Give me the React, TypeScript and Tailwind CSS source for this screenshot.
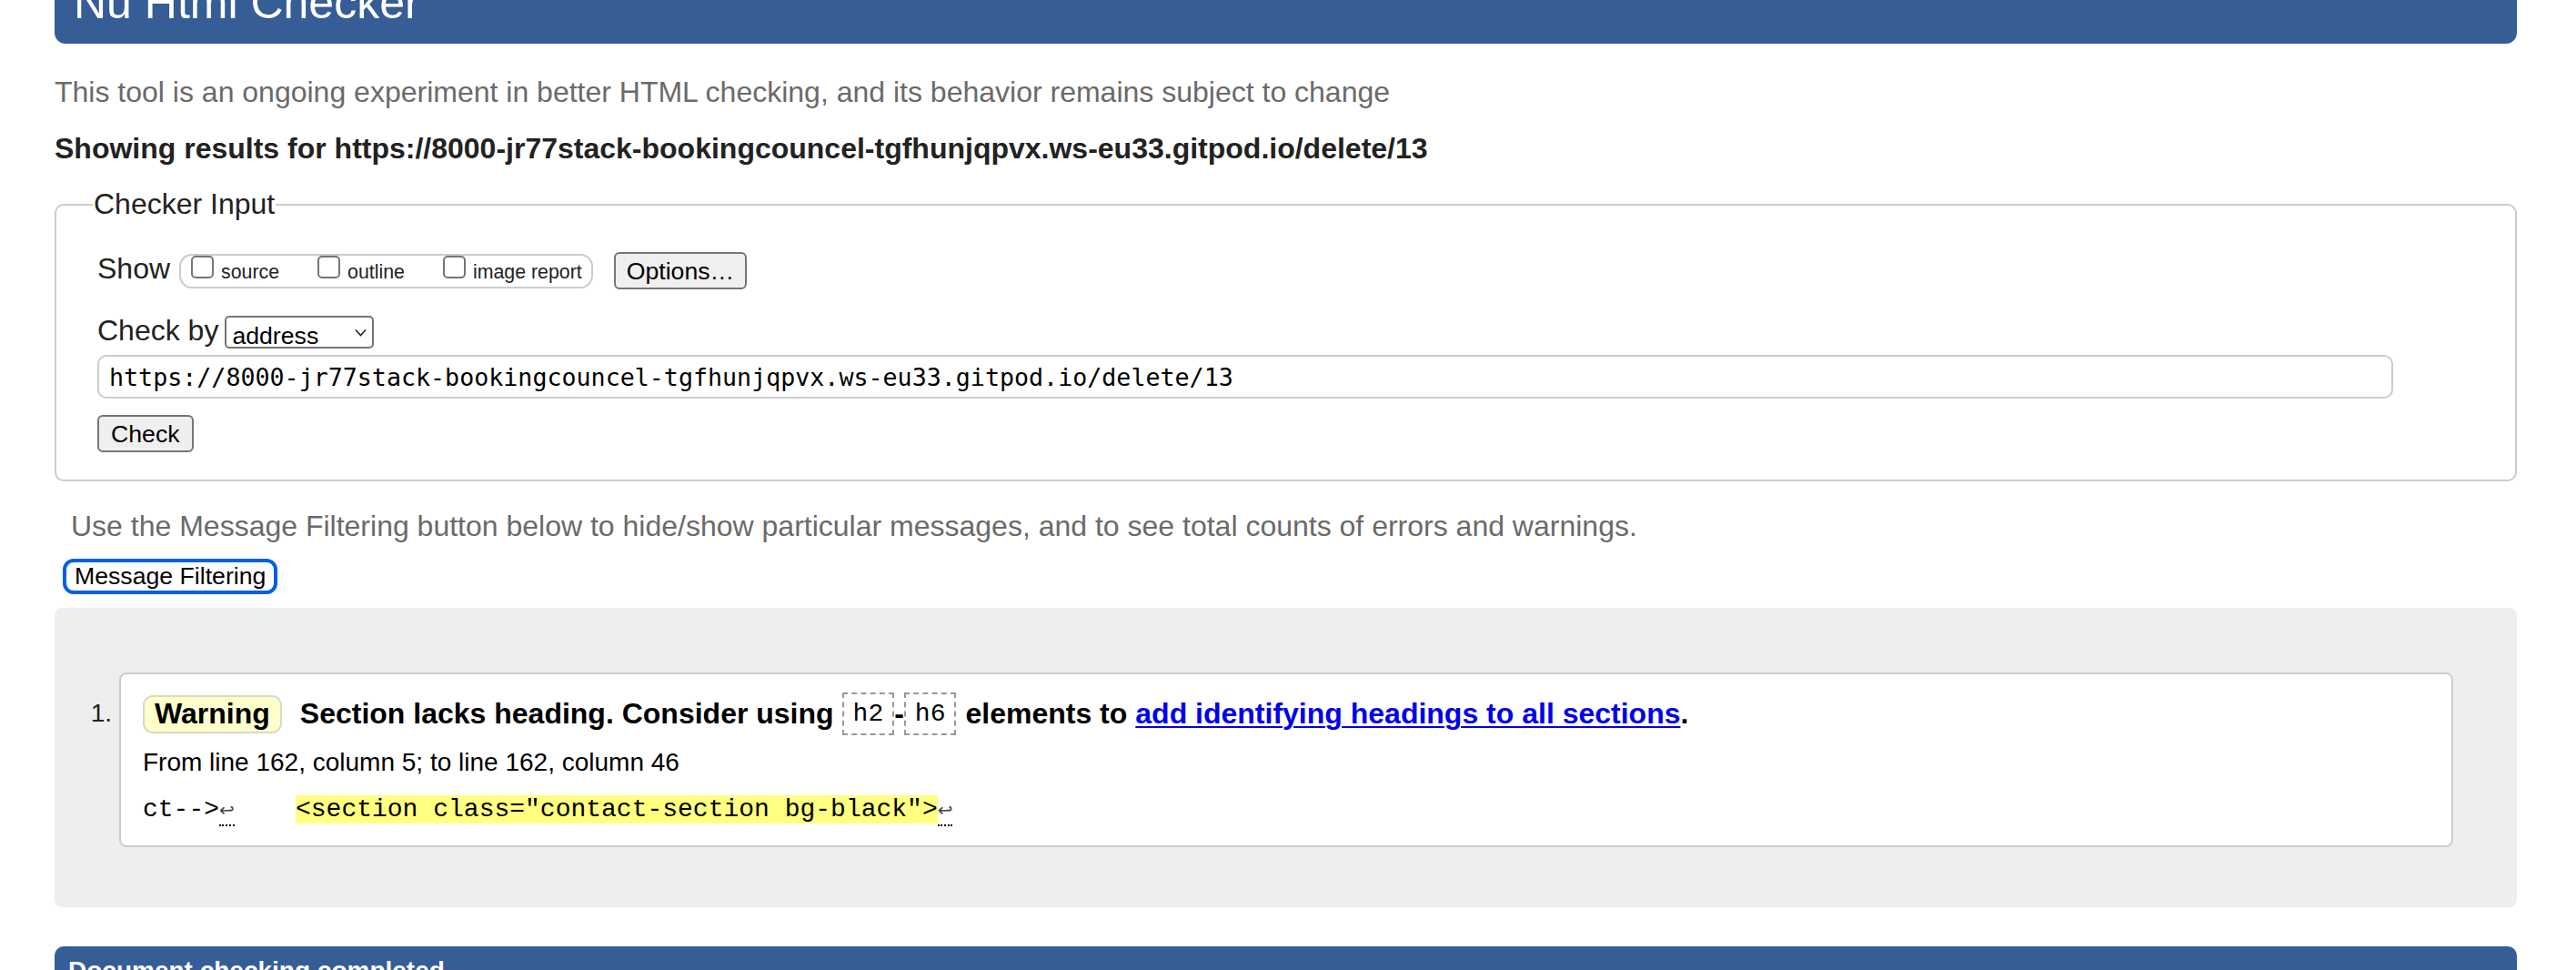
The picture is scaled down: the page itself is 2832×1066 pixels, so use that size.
const URL = 'https://8000-jr77stack-bookingcouncel-tgfhunjqpvx.ws-eu33.gitpod.io/delete/13';

const SHOW_OPTIONS = ['source', 'outline', 'image report'];

export default function App() {
  return (
    <div className="min-h-screen bg-white font-['Liberation_Sans',Arial,sans-serif] text-[#222]">
      <div className="ml-[60px] w-[2707px]">
        {/* Title bar */}
        <header className="flex h-[48px] rounded-b-[12px] bg-[#365d95] pl-[21px]">
          <h1 className="mt-[-22px] text-[50px] leading-[50px] text-white">Nu Html Checker</h1>
        </header>

        <p className="mt-[35px] text-[32px] leading-[37px] text-[#6a6a6a]">
          This tool is an ongoing experiment in better HTML checking, and its behavior remains subject to change
        </p>
        <p className="mt-[25px] text-[32px] font-bold leading-[37px] text-[#222]">Showing results for {URL}</p>

        <CheckerInput />

        <p className="ml-[18px] mt-[31px] text-[32px] leading-[37px] text-[#6a6a6a]">
          Use the Message Filtering button below to hide/show particular messages, and to see total counts of errors and warnings.
        </p>
        <button className="ml-[9px] mt-[17px] block h-[39px] rounded-[12px] border-[4px] border-[#0060df] bg-white px-[9px] text-[26.67px] leading-[31px] text-black">
          Message Filtering
        </button>

        {/* Results */}
        <div className="mt-[15px] flex rounded-[8px] bg-[#eeeeee] pb-[66px] pr-[70px] pt-[71px]">
          <div className="w-[71px] shrink-0 pr-[8px] pt-[29px] text-right text-[28px] leading-[32px] text-[#222]">1.</div>
          <div className="flex-1 rounded-[8px] border-2 border-[#cccccc] bg-white px-[24px] pb-[23px] pt-[20px] text-black">
            <div className="flex h-[47px] items-center text-[32px] font-bold leading-[37px]">
              <span className="flex h-[42px] items-center rounded-[11px] border-2 border-[#d9d9c4] bg-[#ffffcc] px-[11px]">
                Warning
              </span>
              <span className="ml-[20px]">Section lacks heading. Consider using</span>
              <Code className="ml-[9px]">h2</Code>
              <span>-</span>
              <Code>h6</Code>
              <span className="ml-[10px]">elements to</span>
              <a href="#" className="ml-[9px] text-[#0000ee] underline decoration-2 underline-offset-[3px]">
                add identifying headings to all sections
              </a>
              <span>.</span>
            </div>
            <p className="mt-[14px] text-[28px] leading-[32px]">From line 162, column 5; to line 162, column 46</p>
            <p className="mt-[20px] whitespace-pre font-['Liberation_Mono',monospace] text-[28px] leading-[32px]">
              ct--&gt;<LineFeed />{'    '}
              <mark className="bg-[#ffff80] text-black">{'<section class="contact-section bg-black">'}</mark>
              <LineFeed />
            </p>
          </div>
        </div>

        <div className="mt-[43px] h-[80px] rounded-t-[10px] bg-[#365d95] pl-[15px] pt-[11px] text-[28px] font-bold leading-[32px] text-white">
          Document checking completed
        </div>
      </div>
    </div>
  );
}

function CheckerInput() {
  return (
    <fieldset className="mt-[24px] rounded-[10px] border-2 border-[#cccccc] px-[45px] pb-[30px] pt-[34px]">
      <legend className="ml-[-5px] px-[1px] text-[32px] leading-[37px] text-[#222]">Checker Input</legend>
      <div className="flex flex-col items-start">
        {/* Show */}
        <div className="flex h-[41px] items-center">
          <span className="mb-[5px] mr-[10px] text-[32px] leading-[37px]">Show</span>
          <div className="flex h-[38px] items-center gap-[42px] rounded-[14px] border-2 border-[#cccccc] pl-[11px] pr-[10px]">
            {SHOW_OPTIONS.map((label) => (
              <label key={label} className="flex items-center gap-[8px]">
                <input
                  type="checkbox"
                  className="mt-[-8px] h-[25px] w-[25px] appearance-none rounded-[5px] border-2 border-[#767676] bg-white"
                />
                <span className="mt-[3px] text-[21.33px] leading-[25px] text-[#222]">{label}</span>
              </label>
            ))}
          </div>
          <button className="ml-[23px] h-[41px] rounded-[6px] border-2 border-[#767676] bg-[#efefef] px-[12px] text-[26.67px] leading-[30px] text-black">
            Options…
          </button>
        </div>

        {/* Check by */}
        <div className="mt-[30px] flex h-[36px] items-center">
          <span className="mb-[5px] mr-[7px] text-[32px] leading-[37px]">Check by</span>
          <div className="relative">
            <select
              defaultValue="address"
              className="h-[36px] w-[164px] appearance-none rounded-[5px] border-2 border-[#767676] bg-white pl-[6px] text-[26.67px] text-black"
            >
              <option value="address">address</option>
              <option value="file">file upload</option>
              <option value="text">text input</option>
            </select>
            <svg className="pointer-events-none absolute right-[8px] top-[14px] h-[9px] w-[13px]" viewBox="0 0 13 9">
              <path d="M1 1.5l5.5 6L12 1.5" fill="none" stroke="#222" strokeWidth="1.6" />
            </svg>
          </div>
        </div>

        <input
          type="url"
          defaultValue={URL}
          className="mt-[6px] block h-[48px] w-[2524px] rounded-[10px] border-2 border-[#cccccc] bg-white pl-[11px] font-['DejaVu_Sans_Mono',monospace] text-[26.67px] text-black"
        />

        <button className="mt-[18px] h-[41px] rounded-[6px] border-2 border-[#767676] bg-[#efefef] px-[13px] text-[26.67px] leading-[30px] text-black">
          Check
        </button>
      </div>
    </fieldset>
  );
}

function Code({ children, className = '' }: { children: React.ReactNode; className?: string }) {
  return (
    <code
      className={
        'flex h-[47px] items-center border-2 border-dashed border-[#999999] px-[10px] font-[\'Liberation_Mono\',monospace] text-[28px] font-normal ' +
        className
      }
    >
      {children}
    </code>
  );
}

function LineFeed() {
  return (
    <span className="border-b-2 border-dotted border-black pb-[4px] font-['DejaVu_Sans',sans-serif] text-[20px] text-[#444]">
      ↩
    </span>
  );
}
